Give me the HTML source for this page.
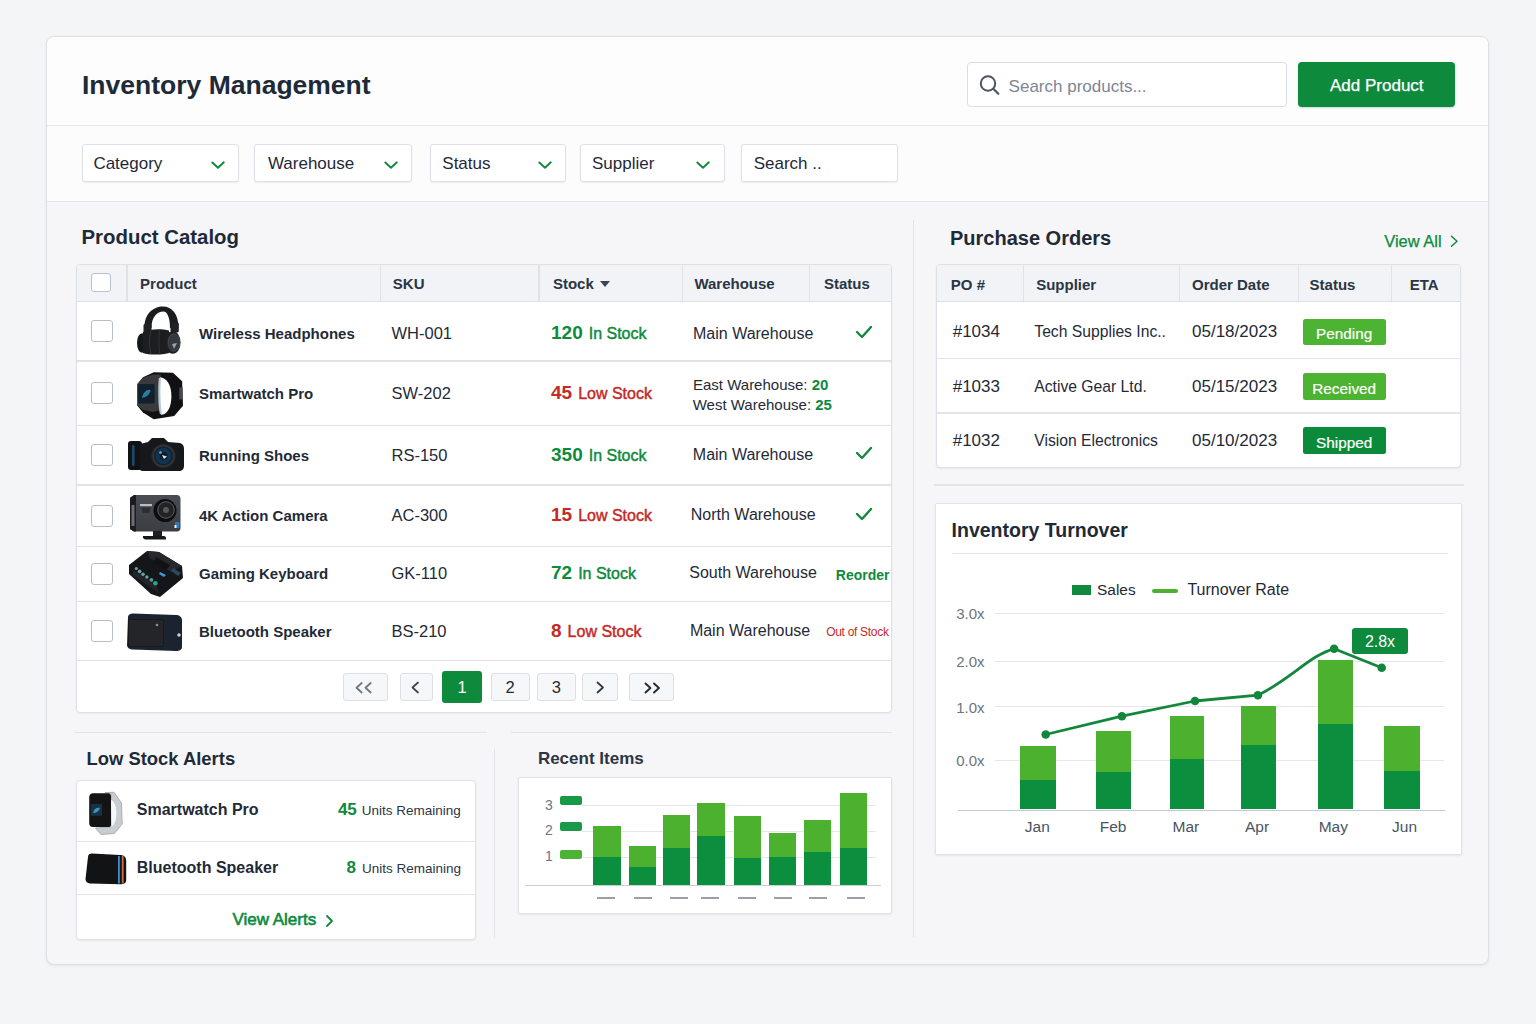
<!DOCTYPE html>
<html><head><meta charset="utf-8"><title>Inventory Management</title>
<style>
html,body{margin:0;padding:0;}
body{width:1536px;height:1024px;position:relative;overflow:hidden;background:#f4f5f7;font-family:"Liberation Sans",sans-serif;}
.t{position:absolute;line-height:1;white-space:nowrap;}
.b{position:absolute;box-sizing:border-box;}
</style></head><body>
<div class="b" style="left:46.0px;top:36.0px;width:1442.5px;height:928.5px;background:#f6f6f8;border:1px solid #dde0e5;border-radius:8px;box-shadow:0 1px 3px rgba(30,40,60,0.08);overflow:hidden"></div>
<div class="b" style="left:47.0px;top:37.0px;width:1440.5px;height:88.0px;background:#fdfdfe;border-radius:7px 7px 0 0"></div>
<div class="b" style="left:47.0px;top:124.5px;width:1440.5px;height:1.5px;background:#e3e5ea"></div>
<div class="b" style="left:47.0px;top:126.0px;width:1440.5px;height:75.0px;background:#fcfcfd"></div>
<div class="b" style="left:47.0px;top:200.5px;width:1440.5px;height:1.5px;background:#e3e5ea"></div>
<div class="t" style="left:82.0px;top:71.7px;font-size:26.5px;font-weight:700;color:#1e2a38;">Inventory Management</div>
<div class="b" style="left:967.0px;top:62.4px;width:319.5px;height:45.0px;background:#fff;border:1.5px solid #d9dde4;border-radius:4px"></div>
<svg class="b" style="left:978px;top:73px" width="24" height="24" viewBox="0 0 24 24"><circle cx="10" cy="10.5" r="7.2" fill="none" stroke="#4b5563" stroke-width="2"/><line x1="15.3" y1="15.8" x2="20.3" y2="20.8" stroke="#4b5563" stroke-width="2.2" stroke-linecap="round"/></svg>
<div class="t" style="left:1008.6px;top:77.5px;font-size:17px;font-weight:400;color:#7d8696;">Search products...</div>
<div class="b" style="left:1297.7px;top:61.7px;width:157.5px;height:45.7px;background:#0d8a3c;border-radius:4px;box-shadow:0 1px 2px rgba(0,60,20,0.2)"></div>
<div class="t" style="left:1330.0px;top:77.2px;font-size:17px;font-weight:400;color:#ffffff;-webkit-text-stroke:0.25px #fff">Add Product</div>
<div class="b" style="left:82.2px;top:144.4px;width:157.1px;height:37.6px;background:#fff;border:1px solid #dfe2e7;border-radius:3px;box-shadow:0 1px 1.5px rgba(30,40,60,0.08)"></div>
<div class="t" style="left:93.4px;top:155.2px;font-size:17px;font-weight:400;color:#1f2937;">Category</div>
<svg class="b" style="left:210px;top:157px" width="16" height="14" viewBox="0 0 16 14"><polyline points="2.3,5.5 8,10.7 13.8,5.3" fill="none" stroke="#11893d" stroke-width="1.9" stroke-linecap="round" stroke-linejoin="round"/></svg>
<div class="b" style="left:253.6px;top:144.4px;width:158.8px;height:37.6px;background:#fff;border:1px solid #dfe2e7;border-radius:3px;box-shadow:0 1px 1.5px rgba(30,40,60,0.08)"></div>
<div class="t" style="left:267.9px;top:155.2px;font-size:17px;font-weight:400;color:#1f2937;">Warehouse</div>
<svg class="b" style="left:383px;top:157px" width="16" height="14" viewBox="0 0 16 14"><polyline points="2.3,5.5 8,10.7 13.8,5.3" fill="none" stroke="#11893d" stroke-width="1.9" stroke-linecap="round" stroke-linejoin="round"/></svg>
<div class="b" style="left:429.6px;top:144.4px;width:136.2px;height:37.6px;background:#fff;border:1px solid #dfe2e7;border-radius:3px;box-shadow:0 1px 1.5px rgba(30,40,60,0.08)"></div>
<div class="t" style="left:442.3px;top:155.2px;font-size:17px;font-weight:400;color:#1f2937;">Status</div>
<svg class="b" style="left:536.5px;top:157px" width="16" height="14" viewBox="0 0 16 14"><polyline points="2.3,5.5 8,10.7 13.8,5.3" fill="none" stroke="#11893d" stroke-width="1.9" stroke-linecap="round" stroke-linejoin="round"/></svg>
<div class="b" style="left:580.4px;top:144.4px;width:144.9px;height:37.6px;background:#fff;border:1px solid #dfe2e7;border-radius:3px;box-shadow:0 1px 1.5px rgba(30,40,60,0.08)"></div>
<div class="t" style="left:592.0px;top:155.2px;font-size:17px;font-weight:400;color:#1f2937;">Supplier</div>
<svg class="b" style="left:695px;top:157px" width="16" height="14" viewBox="0 0 16 14"><polyline points="2.3,5.5 8,10.7 13.8,5.3" fill="none" stroke="#11893d" stroke-width="1.9" stroke-linecap="round" stroke-linejoin="round"/></svg>
<div class="b" style="left:741.2px;top:144.4px;width:157.3px;height:37.6px;background:#fff;border:1px solid #dfe2e7;border-radius:3px;box-shadow:0 1px 1.5px rgba(30,40,60,0.08)"></div>
<div class="t" style="left:753.7px;top:155.2px;font-size:17px;font-weight:400;color:#1f2937;">Search ..</div>
<div class="b" style="left:912.5px;top:220.0px;width:1.2px;height:717.0px;background:#e1e4e9"></div>
<div class="b" style="left:494.0px;top:748.5px;width:1.2px;height:189.0px;background:#e1e4e9"></div>
<div class="t" style="left:81.5px;top:227.1px;font-size:20.4px;font-weight:700;color:#1e2a38;">Product Catalog</div>
<div class="b" style="left:75.5px;top:263.5px;width:816.5px;height:449.5px;background:#fff;border:1px solid #dde1e7;border-radius:4px;box-shadow:0 1px 2px rgba(30,40,60,0.06)"></div>
<div class="b" style="left:76.5px;top:264.5px;width:814.5px;height:37.0px;background:#f1f3f6;border-radius:3px 3px 0 0"></div>
<div class="b" style="left:76.5px;top:301.0px;width:814.5px;height:1.3px;background:#dde1e7"></div>
<div class="b" style="left:126.4px;top:264.5px;width:1.2px;height:36.5px;background:#dfe2e8"></div>
<div class="b" style="left:379.5px;top:264.5px;width:1.2px;height:36.5px;background:#dfe2e8"></div>
<div class="b" style="left:538.4px;top:264.5px;width:1.2px;height:36.5px;background:#dfe2e8"></div>
<div class="b" style="left:681.6px;top:264.5px;width:1.2px;height:36.5px;background:#dfe2e8"></div>
<div class="b" style="left:809.3px;top:264.5px;width:1.2px;height:36.5px;background:#dfe2e8"></div>
<div class="b" style="left:91.4px;top:272.5px;width:19.6px;height:19.0px;background:#fff;border:1.3px solid #b9c1cd;border-radius:3px"></div>
<div class="t" style="left:140.1px;top:276.4px;font-size:15px;font-weight:700;color:#2b3544;">Product</div>
<div class="t" style="left:392.8px;top:276.4px;font-size:15px;font-weight:700;color:#2b3544;">SKU</div>
<div class="t" style="left:552.9px;top:276.4px;font-size:15px;font-weight:700;color:#2b3544;">Stock</div>
<svg class="b" style="left:599px;top:280px" width="12" height="8" viewBox="0 0 12 8"><polygon points="1,1 11,1 6,7" fill="#3a4453"/></svg>
<div class="t" style="left:694.4px;top:276.4px;font-size:15px;font-weight:700;color:#2b3544;">Warehouse</div>
<div class="t" style="left:824.0px;top:276.4px;font-size:15px;font-weight:700;color:#2b3544;">Status</div>
<div class="b" style="left:76.5px;top:360.4px;width:814.5px;height:1.3px;background:#dfe3e8"></div>
<div class="b" style="left:76.5px;top:424.8px;width:814.5px;height:1.3px;background:#dfe3e8"></div>
<div class="b" style="left:76.5px;top:484.4px;width:814.5px;height:1.3px;background:#dfe3e8"></div>
<div class="b" style="left:76.5px;top:545.7px;width:814.5px;height:1.3px;background:#dfe3e8"></div>
<div class="b" style="left:76.5px;top:600.6px;width:814.5px;height:1.3px;background:#dfe3e8"></div>
<div class="b" style="left:76.5px;top:660.1px;width:814.5px;height:1.3px;background:#dfe3e8"></div>
<div class="b" style="left:90.5px;top:320.0px;width:22.5px;height:22.3px;background:#fff;border:1.4px solid #b6becb;border-radius:3px"></div>
<div class="b" style="left:90.5px;top:382.2px;width:22.5px;height:22.3px;background:#fff;border:1.4px solid #b6becb;border-radius:3px"></div>
<div class="b" style="left:90.5px;top:444.2px;width:22.5px;height:22.3px;background:#fff;border:1.4px solid #b6becb;border-radius:3px"></div>
<div class="b" style="left:90.5px;top:504.6px;width:22.5px;height:22.3px;background:#fff;border:1.4px solid #b6becb;border-radius:3px"></div>
<div class="b" style="left:90.5px;top:562.7px;width:22.5px;height:22.3px;background:#fff;border:1.4px solid #b6becb;border-radius:3px"></div>
<div class="b" style="left:90.5px;top:620.0px;width:22.5px;height:22.3px;background:#fff;border:1.4px solid #b6becb;border-radius:3px"></div>
<div class="t" style="left:199.0px;top:325.9px;font-size:15px;font-weight:700;color:#1f2a37;">Wireless Headphones</div>
<div class="t" style="left:391.5px;top:324.7px;font-size:16.5px;font-weight:400;color:#1f2a37;">WH-001</div>
<div class="t" style="left:199.0px;top:385.8px;font-size:15px;font-weight:700;color:#1f2a37;">Smartwatch Pro</div>
<div class="t" style="left:391.5px;top:384.5px;font-size:16.5px;font-weight:400;color:#1f2a37;">SW-202</div>
<div class="t" style="left:199.0px;top:448.2px;font-size:15px;font-weight:700;color:#1f2a37;">Running Shoes</div>
<div class="t" style="left:391.5px;top:447.0px;font-size:16.5px;font-weight:400;color:#1f2a37;">RS-150</div>
<div class="t" style="left:199.0px;top:508.2px;font-size:15px;font-weight:700;color:#1f2a37;">4K Action Camera</div>
<div class="t" style="left:391.5px;top:507.0px;font-size:16.5px;font-weight:400;color:#1f2a37;">AC-300</div>
<div class="t" style="left:199.0px;top:566.2px;font-size:15px;font-weight:700;color:#1f2a37;">Gaming Keyboard</div>
<div class="t" style="left:391.5px;top:565.0px;font-size:16.5px;font-weight:400;color:#1f2a37;">GK-110</div>
<div class="t" style="left:199.0px;top:624.0px;font-size:15px;font-weight:700;color:#1f2a37;">Bluetooth Speaker</div>
<div class="t" style="left:391.5px;top:622.8px;font-size:16.5px;font-weight:400;color:#1f2a37;">BS-210</div>
<div class="t" style="left:551px;top:322.9px;font-size:19px;font-weight:700;color:#0d8a3c">120<span style="font-size:16px;margin-left:6px;font-weight:400;-webkit-text-stroke:0.45px #0d8a3c">In Stock</span></div>
<div class="t" style="left:551px;top:382.7px;font-size:19px;font-weight:700;color:#c42a26">45<span style="font-size:16px;margin-left:6px;font-weight:400;-webkit-text-stroke:0.45px #c42a26">Low Stock</span></div>
<div class="t" style="left:551px;top:445.2px;font-size:19px;font-weight:700;color:#0d8a3c">350<span style="font-size:16px;margin-left:6px;font-weight:400;-webkit-text-stroke:0.45px #0d8a3c">In Stock</span></div>
<div class="t" style="left:551px;top:505.2px;font-size:19px;font-weight:700;color:#c42a26">15<span style="font-size:16px;margin-left:6px;font-weight:400;-webkit-text-stroke:0.45px #c42a26">Low Stock</span></div>
<div class="t" style="left:551px;top:563.1px;font-size:19px;font-weight:700;color:#0d8a3c">72<span style="font-size:16px;margin-left:6px;font-weight:400;-webkit-text-stroke:0.45px #0d8a3c">In Stock</span></div>
<div class="t" style="left:551px;top:620.9px;font-size:19px;font-weight:700;color:#c42a26">8<span style="font-size:16px;margin-left:6px;font-weight:400;-webkit-text-stroke:0.45px #c42a26">Low Stock</span></div>
<div class="t" style="left:693.0px;top:326.1px;font-size:16px;font-weight:400;color:#1f2a37;">Main Warehouse</div>
<div class="t" style="left:693px;top:377.2px;font-size:15px;color:#1f2a37">East Warehouse: <b style="color:#0d8a3c">20</b></div>
<div class="t" style="left:692.7px;top:397.2px;font-size:15px;color:#1f2a37">West Warehouse: <b style="color:#0d8a3c">25</b></div>
<div class="t" style="left:692.8px;top:447.4px;font-size:16px;font-weight:400;color:#1f2a37;">Main Warehouse</div>
<div class="t" style="left:690.8px;top:507.4px;font-size:16px;font-weight:400;color:#1f2a37;">North Warehouse</div>
<div class="t" style="left:689.3px;top:565.4px;font-size:16px;font-weight:400;color:#1f2a37;">South Warehouse</div>
<div class="t" style="left:689.9px;top:623.2px;font-size:16px;font-weight:400;color:#1f2a37;">Main Warehouse</div>
<svg class="b" style="left:855px;top:325px" width="18" height="14" viewBox="0 0 18 14"><polyline points="2,7 7,12 16,2" fill="none" stroke="#13893d" stroke-width="2.4" stroke-linecap="round" stroke-linejoin="round"/></svg>
<svg class="b" style="left:855px;top:446.3px" width="18" height="14" viewBox="0 0 18 14"><polyline points="2,7 7,12 16,2" fill="none" stroke="#13893d" stroke-width="2.4" stroke-linecap="round" stroke-linejoin="round"/></svg>
<svg class="b" style="left:855px;top:507.20000000000005px" width="18" height="14" viewBox="0 0 18 14"><polyline points="2,7 7,12 16,2" fill="none" stroke="#13893d" stroke-width="2.4" stroke-linecap="round" stroke-linejoin="round"/></svg>
<div class="t" style="left:835.8px;top:568.1px;font-size:14px;font-weight:700;color:#0d8a3c;">Reorder</div>
<div class="t" style="left:826.2px;top:625.8px;font-size:12px;font-weight:400;color:#c42a26;letter-spacing:-0.3px">Out of Stock</div>
<div class="b" style="left:342.9px;top:672.6px;width:45.0px;height:28.4px;background:#f6f7f9;border:1px solid #dcdfe5;border-radius:3px"></div>
<div class="b" style="left:399.6px;top:672.6px;width:33.5px;height:28.4px;background:#f6f7f9;border:1px solid #dcdfe5;border-radius:3px"></div>
<div class="b" style="left:442.0px;top:671.2px;width:40.3px;height:31.5px;background:#0d8a3c;border-radius:3px"></div>
<div class="t" style="left:262.1px;width:400px;text-align:center;top:679.0px;font-size:16.5px;font-weight:400;color:#fff;">1</div>
<div class="b" style="left:490.8px;top:672.6px;width:38.9px;height:28.4px;background:#f6f7f9;border:1px solid #dcdfe5;border-radius:3px"></div>
<div class="t" style="left:310.2px;width:400px;text-align:center;top:679.0px;font-size:16.5px;font-weight:400;color:#1f2a37;">2</div>
<div class="b" style="left:537.2px;top:672.6px;width:38.4px;height:28.4px;background:#f6f7f9;border:1px solid #dcdfe5;border-radius:3px"></div>
<div class="t" style="left:356.4px;width:400px;text-align:center;top:679.0px;font-size:16.5px;font-weight:400;color:#1f2a37;">3</div>
<div class="b" style="left:582.2px;top:672.6px;width:35.6px;height:28.4px;background:#f6f7f9;border:1px solid #dcdfe5;border-radius:3px"></div>
<div class="b" style="left:628.6px;top:672.6px;width:45.9px;height:28.4px;background:#f6f7f9;border:1px solid #dcdfe5;border-radius:3px"></div>
<svg class="b" style="left:0;top:0" width="1536" height="1024"><polyline points="361.725,683 356.5,687.75 361.725,692.5" fill="none" stroke="#6b7482" stroke-width="1.7" stroke-linecap="round" stroke-linejoin="round"/><polyline points="370.725,683 365.5,687.75 370.725,692.5" fill="none" stroke="#6b7482" stroke-width="1.7" stroke-linecap="round" stroke-linejoin="round"/><polyline points="418.0,682.5 412.5,687.5 418.0,692.5" fill="none" stroke="#3a4453" stroke-width="1.7" stroke-linecap="round" stroke-linejoin="round"/><polyline points="597.5,682.5 603.0,687.5 597.5,692.5" fill="none" stroke="#2b3544" stroke-width="1.7" stroke-linecap="round" stroke-linejoin="round"/><polyline points="645.5,683.5 650.45,688.0 645.5,692.5" fill="none" stroke="#1f2a37" stroke-width="1.9" stroke-linecap="round" stroke-linejoin="round"/><polyline points="654,683.5 658.95,688.0 654,692.5" fill="none" stroke="#1f2a37" stroke-width="1.9" stroke-linecap="round" stroke-linejoin="round"/></svg>
<svg class="b" style="left:133px;top:302px" width="52" height="56" viewBox="0 0 52 56">
<path d="M11.5,26 C11,12 20,4.4 30,4.4 C39,4.4 45.5,12 45.5,26 L37,26 C37,15 34,9.5 30.5,9.5 C24,9.5 18.5,15 18.5,26 Z" fill="#1b1c1e"/>
<rect x="10.5" y="22" width="8" height="9" rx="1.5" fill="#202124"/>
<rect x="37.5" y="20.5" width="8.3" height="10" rx="1.5" fill="#202124"/>
<ellipse cx="9" cy="41" rx="5" ry="9.8" fill="#161719"/>
<path d="M10,30 C16,27 28,26.5 36,28.5 L36,51 C28,53 16,53 10,51 Z" fill="#1c1d20"/>
<path d="M18,28.5 C16,35 16,45 18,52" fill="none" stroke="#34363a" stroke-width="1"/>
<path d="M27,27.5 C25.5,35 25.5,45 27,52.5" fill="none" stroke="#303236" stroke-width="1"/>
<ellipse cx="39.7" cy="40.5" rx="7.9" ry="11.3" fill="#1e1f22"/>
<ellipse cx="40.8" cy="40.5" rx="5.8" ry="8.8" fill="#35383d" stroke="#505359" stroke-width="0.7"/>
<path d="M39,42 L44,41 L41,47 Z" fill="#9da2aa"/>
</svg>
<svg class="b" style="left:135px;top:370px" width="50" height="52" viewBox="0 0 50 52">
<polygon points="8,7.3 18.8,2.2 38,2.8 47.1,11.3 48,35.7 39.2,45.9 18.8,49.3 8,42.5 2.4,35.7 2.4,14.1" fill="#111113"/>
<path d="M7.5,8 L18,4.5 L25.6,4.5 L26,40 L18,42 L8,40 L2.4,35.7 L2.4,14.1 Z" fill="#3a393b"/>
<rect x="3.2" y="14.1" width="16.5" height="19.5" rx="1.5" fill="#10202c"/>
<path d="M7,28 C8,22 12,19 15.5,20 C15,24 12,27 7,28 Z" fill="#2f86b0" opacity="0.9"/>
<path d="M25,7.3 C31,8 36.4,14 36.4,26 C36.4,38 32,44.7 26,44.7 C24,38 24.5,12 25,7.3 Z" fill="#ffffff"/>
<path d="M25,8 C24,16 24,36 26,44" fill="none" stroke="#b3c8d8" stroke-width="2.2"/>
<rect x="44.3" y="17.5" width="3.4" height="11.9" fill="#4a4a4d"/>
</svg>
<svg class="b" style="left:126px;top:434px" width="60" height="40" viewBox="0 0 60 40">
<rect x="2" y="7" width="14" height="29" rx="3" fill="#111214"/>
<rect x="6" y="11" width="2.6" height="21" rx="1" fill="#1a4a6c"/>
<path d="M14,10 L22,8 L26,4 L38,4 L42,8 L54,9 C57,10 58,12 58,15 L58,32 C58,35 56,37 53,37 L16,37 L14,36 Z" fill="#17181b"/>
<circle cx="37.5" cy="22" r="12" fill="#2a2c30"/>
<circle cx="37.5" cy="22" r="10" fill="#0d2233" stroke="#4a4540" stroke-width="0.6"/>
<circle cx="37.5" cy="22" r="8" fill="#14344d"/>
<circle cx="37.5" cy="22" r="4" fill="#0c1e2c"/>
<circle cx="34.5" cy="18.5" r="1.3" fill="#6fa8d0"/>
<path d="M36,21 L41,22.5 L38,25 Z" fill="#d8e6f0"/>
</svg>
<svg class="b" style="left:125px;top:492px" width="56" height="50" viewBox="0 0 56 50">
<defs><linearGradient id="acg" x1="0" y1="0" x2="0" y2="1"><stop offset="0" stop-color="#4a4d53"/><stop offset="1" stop-color="#3a3d42"/></linearGradient></defs>
<path d="M5,6 L9,3 L52,3 C54,3 55.5,4.5 55.5,7 L55.5,36 C55.5,38 54,39.5 52,39.5 L9,39.5 L5,37 Z" fill="url(#acg)"/>
<path d="M5,6 L9,3 L11,3 L11,39.5 L9,39.5 L5,37 Z" fill="#1b1c1f"/>
<rect x="6.5" y="13" width="3" height="21" fill="#6a6e74"/>
<rect x="15" y="12" width="12" height="2.2" fill="#b9bdc3"/>
<path d="M16,15.5 L26,15.5 L24,21 L18,21 Z" fill="#2c2e33"/>
<circle cx="40" cy="18.5" r="11.5" fill="#0c0d0f"/>
<circle cx="41" cy="18" r="8.3" fill="#202226" stroke="#7a7e84" stroke-width="0.7"/>
<circle cx="41" cy="18" r="3" fill="#55585e"/>
<rect x="50" y="30" width="4.5" height="6" fill="#2f78b8"/>
<rect x="49.5" y="33" width="2" height="3" fill="#e8f1f8"/>
<rect x="28" y="39" width="9" height="5" fill="#1d1e21"/>
<path d="M18,44 L39,44 C40,44 41,45 41,46 L41,47.5 L20,47.5 L18,46 Z" fill="#17181b"/>
</svg>
<svg class="b" style="left:126px;top:548px" width="60" height="52" viewBox="0 0 60 52">
<polygon points="3,17 21,3 33,4 56,18 57,30 34,49 25,46 3,26" fill="#15161a"/>
<polygon points="21,3 33,4 56,18 45,24 24,10" fill="#26282d"/>
<polygon points="30,9 44,17 40,22 28,14" fill="#111215"/>
<polygon points="8,22 30,36 33,45 6,27" fill="#222429"/>
<circle cx="10.3" cy="20.6" r="1.5" fill="#8a9a9c"/>
<circle cx="13.6" cy="23.4" r="1.8" fill="#6aa6aa"/>
<circle cx="17" cy="26.2" r="1.8" fill="#68a4a6"/>
<circle cx="20.9" cy="29" r="1.7" fill="#6aa2a2"/>
<circle cx="25.4" cy="31.8" r="1.9" fill="#4a9e94"/>
<circle cx="29.4" cy="35.2" r="2.3" fill="#2aa38e"/>
<path d="M34,24 L40,27 L38,29 L33,26 Z" fill="#3b9ad8"/>
<polygon points="47,20 55,25 52,28 45,23" fill="#2a4a5a"/>
</svg>
<svg class="b" style="left:124px;top:611px" width="60" height="42" viewBox="0 0 60 42">
<path d="M4,6 C4,4 6,2.5 9,2.5 L52,4 C55,4 58,6 58,9 L58,36 C58,39 55,40 52,40 L9,38.5 C6,38.5 3,37 3,34 Z" fill="#1b2330"/>
<rect x="4" y="8" width="36" height="28" rx="2" fill="#17191c"/>
<rect x="5" y="9" width="34" height="26" rx="1.5" fill="#232528"/>
<circle cx="33" cy="14" r="1.3" fill="#8a8e94"/>
<circle cx="55" cy="24" r="1.8" fill="#c9ccd0"/>
</svg>
<div class="b" style="left:74.3px;top:731.5px;width:412.5px;height:1.5px;background:#e1e4e9"></div>
<div class="t" style="left:86.6px;top:750.2px;font-size:18.4px;font-weight:700;color:#1e2a38;">Low Stock Alerts</div>
<div class="b" style="left:75.8px;top:779.6px;width:400.7px;height:160.4px;background:#fff;border:1px solid #dfe2e7;border-radius:4px;box-shadow:0 1px 2px rgba(30,40,60,0.07)"></div>
<div class="b" style="left:76.8px;top:840.7px;width:398.7px;height:1.3px;background:#e2e5ea"></div>
<div class="b" style="left:76.8px;top:893.7px;width:398.7px;height:1.3px;background:#e2e5ea"></div>
<svg class="b" style="left:85px;top:789px" width="40" height="48" viewBox="0 0 40 48">
<polygon points="20,3.7 29,3.2 36.5,14 37.2,35 29.5,44.5 16,45.5 10.5,39 26,38 26,5" fill="#c9cdd2" stroke="#9ea3a9" stroke-width="0.8"/>
<path d="M26,11 C29,12 31,16 31.3,23 C31.5,30 30,35 26.5,38 Z" fill="#f6f7f8"/>
<path d="M8,4.2 L23,4.2 C25,4.2 26,5.5 26,7.5 L26,36 C26,37.5 25,38.1 23,38.1 L8,38.1 C5.5,38.1 4.2,36.5 4.2,34 L4.2,8.5 C4.2,6 5.5,4.2 8,4.2 Z" fill="#141416"/>
<rect x="5.8" y="15" width="11.2" height="11.8" rx="1" fill="#163247"/>
<path d="M8,24 C9,19.5 12,18 15,19 C14,22 11.5,24 8,24 Z" fill="#3fa0d0" opacity="0.9"/>
</svg>
<div class="t" style="left:136.8px;top:801.5px;font-size:16px;font-weight:700;color:#1f2a37;">Smartwatch Pro</div>
<div class="t" style="left:337.9px;top:801.0px;font-size:17px;font-weight:700;color:#0d8a3c">45<span style="font-size:13.5px;font-weight:400;color:#2b3544;margin-left:5px">Units Remaining</span></div>
<svg class="b" style="left:83px;top:851px" width="46" height="38" viewBox="0 0 46 38">
<path d="M5,6 C5,3.5 6.5,2.5 9,2.5 L37,4 C41,4 43.2,6 43.2,10 L43.2,29 C43.2,32 41,33.2 37,33.2 L8,32.5 C5,32.5 2.5,31 2.5,28 Z" fill="#121315"/>
<rect x="35" y="5" width="1.8" height="27.5" fill="#3b8fd6"/>
<rect x="38.8" y="5" width="1.8" height="27.5" fill="#d9683a"/>
</svg>
<div class="t" style="left:136.8px;top:859.6px;font-size:16px;font-weight:700;color:#1f2a37;">Bluetooth Speaker</div>
<div class="t" style="left:346.5px;top:859.0px;font-size:17px;font-weight:700;color:#0d8a3c">8<span style="font-size:13.5px;font-weight:400;color:#2b3544;margin-left:6px">Units Remaining</span></div>
<div class="t" style="left:232.4px;top:911.2px;font-size:17px;font-weight:400;color:#0d8a3c;-webkit-text-stroke:0.6px #0d8a3c">View Alerts</div>
<svg class="b" style="left:323.5px;top:912.5px" width="12" height="16" viewBox="0 0 12 16"><polyline points="3,3 8,8 3,13" fill="none" stroke="#13893d" stroke-width="1.8" stroke-linecap="round" stroke-linejoin="round"/></svg>
<div class="b" style="left:510.5px;top:731.5px;width:381.5px;height:1.5px;background:#e1e4e9"></div>
<div class="t" style="left:537.9px;top:750.1px;font-size:17px;font-weight:700;color:#2b3544;">Recent Items</div>
<div class="b" style="left:517.9px;top:776.6px;width:374.1px;height:137.4px;background:#fff;border:1px solid #e0e3e8;border-radius:2px;box-shadow:0 1px 2px rgba(30,40,60,0.08)"></div>
<div class="b" style="left:581.6px;top:804.8px;width:294.0px;height:1.0px;background:#e3e6eb"></div>
<div class="b" style="left:581.6px;top:830.8px;width:294.0px;height:1.0px;background:#e3e6eb"></div>
<div class="b" style="left:581.6px;top:857.0px;width:294.0px;height:1.0px;background:#e3e6eb"></div>
<div class="b" style="left:525.0px;top:884.7px;width:355.5px;height:1.2px;background:#c9ced6"></div>
<div class="t" style="left:348.8px;width:400px;text-align:center;top:798.4px;font-size:14px;font-weight:400;color:#6b7482;">3</div>
<div class="t" style="left:348.8px;width:400px;text-align:center;top:822.5px;font-size:14px;font-weight:400;color:#6b7482;">2</div>
<div class="t" style="left:348.8px;width:400px;text-align:center;top:849.0px;font-size:14px;font-weight:400;color:#6b7482;">1</div>
<div class="b" style="left:559.7px;top:795.7px;width:21.9px;height:9.1px;background:#179a45;border-radius:2px"></div>
<div class="b" style="left:559.7px;top:822.0px;width:21.9px;height:9.3px;background:#1a9a47;border-radius:2px"></div>
<div class="b" style="left:559.7px;top:849.9px;width:21.9px;height:9.0px;background:#4db336;border-radius:2px"></div>
<div class="b" style="left:593.4px;top:826.1px;width:27.3px;height:31.2px;background:#4bb12f"></div>
<div class="b" style="left:593.4px;top:857.3px;width:27.3px;height:27.6px;background:#0b8f3e"></div>
<div class="b" style="left:628.9px;top:845.8px;width:27.1px;height:21.3px;background:#4bb12f"></div>
<div class="b" style="left:628.9px;top:867.1px;width:27.1px;height:17.8px;background:#0b8f3e"></div>
<div class="b" style="left:662.8px;top:814.6px;width:26.8px;height:33.1px;background:#4bb12f"></div>
<div class="b" style="left:662.8px;top:847.7px;width:26.8px;height:37.2px;background:#0b8f3e"></div>
<div class="b" style="left:697.0px;top:802.6px;width:27.6px;height:33.1px;background:#4bb12f"></div>
<div class="b" style="left:697.0px;top:835.7px;width:27.6px;height:49.2px;background:#0b8f3e"></div>
<div class="b" style="left:733.9px;top:816.3px;width:27.1px;height:41.8px;background:#4bb12f"></div>
<div class="b" style="left:733.9px;top:858.1px;width:27.1px;height:26.8px;background:#0b8f3e"></div>
<div class="b" style="left:768.9px;top:833.0px;width:26.8px;height:24.3px;background:#4bb12f"></div>
<div class="b" style="left:768.9px;top:857.3px;width:26.8px;height:27.6px;background:#0b8f3e"></div>
<div class="b" style="left:803.9px;top:819.5px;width:27.1px;height:32.6px;background:#4bb12f"></div>
<div class="b" style="left:803.9px;top:852.1px;width:27.1px;height:32.8px;background:#0b8f3e"></div>
<div class="b" style="left:840.0px;top:792.5px;width:27.4px;height:55.2px;background:#4bb12f"></div>
<div class="b" style="left:840.0px;top:847.7px;width:27.4px;height:37.2px;background:#0b8f3e"></div>
<div class="b" style="left:597.2px;top:897.2px;width:18.0px;height:1.6px;background:#9aa1ab"></div>
<div class="b" style="left:634.1px;top:897.2px;width:18.0px;height:1.6px;background:#9aa1ab"></div>
<div class="b" style="left:670.2px;top:897.2px;width:18.0px;height:1.6px;background:#9aa1ab"></div>
<div class="b" style="left:701.1px;top:897.2px;width:18.0px;height:1.6px;background:#9aa1ab"></div>
<div class="b" style="left:737.5px;top:897.2px;width:18.0px;height:1.6px;background:#9aa1ab"></div>
<div class="b" style="left:774.1px;top:897.2px;width:18.0px;height:1.6px;background:#9aa1ab"></div>
<div class="b" style="left:809.1px;top:897.2px;width:18.0px;height:1.6px;background:#9aa1ab"></div>
<div class="b" style="left:847.4px;top:897.2px;width:18.0px;height:1.6px;background:#9aa1ab"></div>
<div class="t" style="left:950.0px;top:228.3px;font-size:20px;font-weight:700;color:#1e2a38;">Purchase Orders</div>
<div class="t" style="left:1384.2px;top:233.1px;font-size:16.5px;font-weight:400;color:#0d8a3c;-webkit-text-stroke:0.25px #0d8a3c">View All</div>
<svg class="b" style="left:1448.5px;top:233px" width="12" height="16" viewBox="0 0 12 16"><polyline points="2.5,3.2 8,8.3 2.5,13.3" fill="none" stroke="#13893d" stroke-width="1.5" stroke-linecap="round" stroke-linejoin="round"/></svg>
<div class="b" style="left:936.0px;top:263.8px;width:524.5px;height:204.2px;background:#fff;border:1px solid #dde1e7;border-radius:4px;box-shadow:0 1px 2px rgba(30,40,60,0.07)"></div>
<div class="b" style="left:937.0px;top:264.8px;width:522.5px;height:36.9px;background:#f1f3f6;border-radius:3px 3px 0 0"></div>
<div class="b" style="left:937.0px;top:301.2px;width:522.5px;height:1.3px;background:#dde1e7"></div>
<div class="b" style="left:1023.2px;top:264.8px;width:1.2px;height:36.4px;background:#dfe2e8"></div>
<div class="b" style="left:1179.0px;top:264.8px;width:1.2px;height:36.4px;background:#dfe2e8"></div>
<div class="b" style="left:1297.8px;top:264.8px;width:1.2px;height:36.4px;background:#dfe2e8"></div>
<div class="b" style="left:1391.3px;top:264.8px;width:1.2px;height:36.4px;background:#dfe2e8"></div>
<div class="b" style="left:937.0px;top:357.8px;width:522.5px;height:1.3px;background:#e2e5ea"></div>
<div class="b" style="left:937.0px;top:412.4px;width:522.5px;height:1.3px;background:#e2e5ea"></div>
<div class="t" style="left:950.8px;top:277.1px;font-size:15px;font-weight:700;color:#2b3544;">PO #</div>
<div class="t" style="left:1036.2px;top:277.1px;font-size:15px;font-weight:700;color:#2b3544;">Supplier</div>
<div class="t" style="left:1192.0px;top:277.1px;font-size:15px;font-weight:700;color:#2b3544;">Order Date</div>
<div class="t" style="left:1309.6px;top:277.1px;font-size:15px;font-weight:700;color:#2b3544;">Status</div>
<div class="t" style="left:1409.8px;top:277.1px;font-size:15px;font-weight:700;color:#2b3544;">ETA</div>
<div class="t" style="left:952.7px;top:322.6px;font-size:17px;font-weight:400;color:#1f2a37;">#1034</div>
<div class="t" style="left:1034.3px;top:323.7px;font-size:15.7px;font-weight:400;color:#1f2a37;">Tech Supplies Inc..</div>
<div class="t" style="left:1192.0px;top:322.6px;font-size:17px;font-weight:400;color:#1f2a37;">05/18/2023</div>
<div class="b" style="left:1302.6px;top:319.1px;width:83.1px;height:26.0px;background:#4db332;border-radius:2.5px"></div>
<div class="t" style="left:1144.2px;width:400px;text-align:center;top:325.5px;font-size:15.3px;font-weight:400;color:#ffffff;-webkit-text-stroke:0.2px #fff">Pending</div>
<div class="t" style="left:952.7px;top:378.2px;font-size:17px;font-weight:400;color:#1f2a37;">#1033</div>
<div class="t" style="left:1034.3px;top:379.3px;font-size:15.7px;font-weight:400;color:#1f2a37;">Active Gear Ltd.</div>
<div class="t" style="left:1192.0px;top:378.2px;font-size:17px;font-weight:400;color:#1f2a37;">05/15/2023</div>
<div class="b" style="left:1302.6px;top:373.3px;width:83.1px;height:26.3px;background:#4db332;border-radius:2.5px"></div>
<div class="t" style="left:1144.2px;width:400px;text-align:center;top:381.1px;font-size:15.3px;font-weight:400;color:#ffffff;-webkit-text-stroke:0.2px #fff">Received</div>
<div class="t" style="left:952.7px;top:431.9px;font-size:17px;font-weight:400;color:#1f2a37;">#1032</div>
<div class="t" style="left:1034.3px;top:433.1px;font-size:15.7px;font-weight:400;color:#1f2a37;">Vision Electronics</div>
<div class="t" style="left:1192.0px;top:431.9px;font-size:17px;font-weight:400;color:#1f2a37;">05/10/2023</div>
<div class="b" style="left:1302.6px;top:427.0px;width:83.1px;height:26.8px;background:#0b8a3a;border-radius:2.5px"></div>
<div class="t" style="left:1144.2px;width:400px;text-align:center;top:434.9px;font-size:15.3px;font-weight:400;color:#ffffff;-webkit-text-stroke:0.2px #fff">Shipped</div>
<div class="b" style="left:933.7px;top:484.0px;width:529.9px;height:1.5px;background:#e1e4e9"></div>
<div class="b" style="left:935.0px;top:502.9px;width:527.3px;height:352.4px;background:#fff;border:1px solid #e0e3e8;border-radius:2px;box-shadow:0 1px 2px rgba(30,40,60,0.08)"></div>
<div class="t" style="left:951.6px;top:520.5px;font-size:19.5px;font-weight:700;color:#1e2a38;">Inventory Turnover</div>
<div class="b" style="left:952.4px;top:552.6px;width:495.2px;height:1.2px;background:#e3e6eb"></div>
<div class="b" style="left:1072.4px;top:584.8px;width:19.0px;height:10.2px;background:#0f8a3e"></div>
<div class="t" style="left:1097.1px;top:582.2px;font-size:15.4px;font-weight:400;color:#1f2a37;">Sales</div>
<div class="b" style="left:1151.6px;top:588.5px;width:26.3px;height:4.0px;background:#4bb12f;border-radius:2px"></div>
<div class="t" style="left:1187.4px;top:581.7px;font-size:16px;font-weight:400;color:#1f2a37;">Turnover Rate</div>
<div class="b" style="left:995.0px;top:612.8px;width:448.8px;height:1.1px;background:#e4e7ec"></div>
<div class="t" style="left:956.2px;top:606.0px;font-size:15px;font-weight:400;color:#6b7482;">3.0x</div>
<div class="b" style="left:995.0px;top:660.5px;width:448.8px;height:1.1px;background:#e4e7ec"></div>
<div class="t" style="left:956.2px;top:653.8px;font-size:15px;font-weight:400;color:#6b7482;">2.0x</div>
<div class="b" style="left:995.0px;top:706.2px;width:448.8px;height:1.1px;background:#e4e7ec"></div>
<div class="t" style="left:956.2px;top:699.5px;font-size:15px;font-weight:400;color:#6b7482;">1.0x</div>
<div class="b" style="left:995.0px;top:759.5px;width:448.8px;height:1.1px;background:#e4e7ec"></div>
<div class="t" style="left:956.2px;top:752.8px;font-size:15px;font-weight:400;color:#6b7482;">0.0x</div>
<div class="b" style="left:958.0px;top:809.8px;width:486.6px;height:1.4px;background:#c5cad2"></div>
<div class="b" style="left:1020.2px;top:745.5px;width:36.2px;height:34.3px;background:#4bb12f"></div>
<div class="b" style="left:1020.2px;top:779.8px;width:36.2px;height:29.7px;background:#0b8f3e"></div>
<div class="b" style="left:1096.0px;top:731.4px;width:35.4px;height:40.8px;background:#4bb12f"></div>
<div class="b" style="left:1096.0px;top:772.2px;width:35.4px;height:37.3px;background:#0b8f3e"></div>
<div class="b" style="left:1169.5px;top:716.2px;width:34.7px;height:42.7px;background:#4bb12f"></div>
<div class="b" style="left:1169.5px;top:758.9px;width:34.7px;height:50.6px;background:#0b8f3e"></div>
<div class="b" style="left:1240.8px;top:705.9px;width:35.0px;height:38.9px;background:#4bb12f"></div>
<div class="b" style="left:1240.8px;top:744.8px;width:35.0px;height:64.7px;background:#0b8f3e"></div>
<div class="b" style="left:1318.1px;top:660.2px;width:35.0px;height:63.6px;background:#4bb12f"></div>
<div class="b" style="left:1318.1px;top:723.8px;width:35.0px;height:85.7px;background:#0b8f3e"></div>
<div class="b" style="left:1384.0px;top:725.7px;width:36.2px;height:45.7px;background:#4bb12f"></div>
<div class="b" style="left:1384.0px;top:771.4px;width:36.2px;height:38.1px;background:#0b8f3e"></div>
<div class="t" style="left:837.3px;width:400px;text-align:center;top:819.2px;font-size:15.5px;font-weight:400;color:#4a5462;">Jan</div>
<div class="t" style="left:913.1px;width:400px;text-align:center;top:819.2px;font-size:15.5px;font-weight:400;color:#4a5462;">Feb</div>
<div class="t" style="left:985.9px;width:400px;text-align:center;top:819.2px;font-size:15.5px;font-weight:400;color:#4a5462;">Mar</div>
<div class="t" style="left:1057.1px;width:400px;text-align:center;top:819.2px;font-size:15.5px;font-weight:400;color:#4a5462;">Apr</div>
<div class="t" style="left:1133.3px;width:400px;text-align:center;top:819.2px;font-size:15.5px;font-weight:400;color:#4a5462;">May</div>
<div class="t" style="left:1204.6px;width:400px;text-align:center;top:819.2px;font-size:15.5px;font-weight:400;color:#4a5462;">Jun</div>
<svg class="b" style="left:0;top:0" width="1536" height="1024"><path d="M1045.7,734.5 L1121.9,716.2 L1195,701 L1257.9,695.2 C1290,680 1310,655 1334.1,648.8 L1381.7,667.8" fill="none" stroke="#12873b" stroke-width="2.8" stroke-linejoin="round"/><circle cx="1045.7" cy="734.5" r="4.3" fill="#12873b"/><circle cx="1121.9" cy="716.2" r="4.3" fill="#12873b"/><circle cx="1195" cy="701" r="4.3" fill="#12873b"/><circle cx="1257.9" cy="695.2" r="4.3" fill="#12873b"/><circle cx="1334.1" cy="648.8" r="4.3" fill="#12873b"/><circle cx="1381.7" cy="667.8" r="4.3" fill="#12873b"/></svg>
<div class="b" style="left:1352.4px;top:627.8px;width:55.2px;height:26.7px;background:#0d8a3c;border-radius:3px"></div>
<div class="t" style="left:1180.0px;width:400px;text-align:center;top:633.9px;font-size:16px;font-weight:400;color:#ffffff;">2.8x</div>
</body></html>
